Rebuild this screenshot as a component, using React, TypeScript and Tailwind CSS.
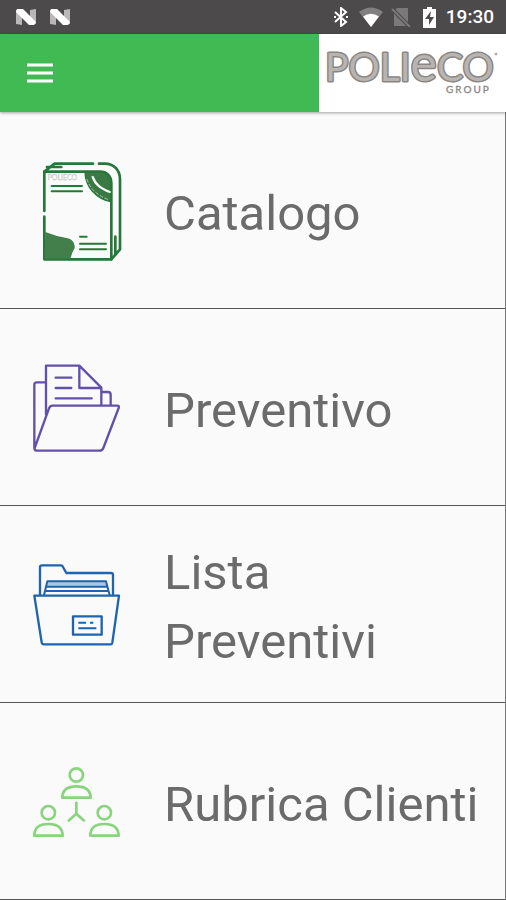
import type { ReactNode } from "react";

interface MenuItem {
  label: string;
  href: string;
  icon: ReactNode;
}

const ICON_CLASS = "h-[120px] w-[110px] shrink-0";

function CatalogIcon() {
  return (
    <svg viewBox="0 0 330 360" className={ICON_CLASS} fill="none" stroke="#27773a" strokeWidth="8" strokeLinecap="round" strokeLinejoin="round" aria-hidden="true">
      <path d="M58 183V65h120M58 200v128h201V100c0-22-14-35-34-35h-47" />
      <path d="M58 65l31-24h115M66 51h43M222 41h17c28 0 46 19 46 46v211l-26 30M271 260v55l14-17" />
      <path d="M80 108h91M80 124h91M165 260h20M165 281h78M165 298h78" strokeWidth="6" />
      <path d="M61 246l35 12 32 7c16 4 22 16 21 30-7 10-9 20-13 31H59z" fill="#437f4b" stroke="none" />
      <path d="M180 66h45c20 0 32 12 32 33v56c-42-8-76-43-77-89z" fill="#397943" strokeWidth="4" />
      <path d="M203 81c8 23 23 33 51 45" stroke="#fafafa" strokeWidth="7" />
      <path d="M186 88c9 30 34 50 65 61" stroke="#a9c7ab" strokeWidth="3" strokeDasharray="9 7" />
      <text x="68" y="90" fontFamily="Lato, sans-serif" fontSize="21" fill="none" stroke="#b4b8b4" strokeWidth="1">POLIECO</text>
    </svg>
  );
}

function OpenFolderIcon() {
  return (
    <svg viewBox="0 -24 330 360" className={ICON_CLASS} fill="none" stroke="#6250a9" strokeWidth="7" strokeLinejoin="round" aria-hidden="true">
      <path d="M62 82H35q-7 0-7 7v189q0 9 9 9h187q8 0 11-8l46-120q3-7-5-7H83q-8 0-11 8L29 279" />
      <path d="M63 181V32h100l66 66v54M163 32v67h66M229 111h20q8 0 8 8v33" />
      <path d="M92 68h47M92 99h47M92 130h108" strokeLinecap="round" />
    </svg>
  );
}

function ArchiveIcon() {
  return (
    <svg viewBox="0 -33 330 360" className={ICON_CLASS} fill="none" stroke="#1e64ae" strokeWidth="7" strokeLinejoin="round" aria-hidden="true">
      <path d="M66 79h178v14H66z" fill="#afc6e5" stroke="none" />
      <path d="M45 121V37q0-6 6-6h57q4 0 6 5l10 18h134q6 0 6 6v61" />
      <path d="M57 121l10-42h176l11 42M64 95h183M61 108h190" strokeWidth="6" />
      <path d="M28 122h254l-20 141q-1 5-6 5H57q-6 0-7-6z" />
      <path d="M144 184h86v55h-86z" />
      <path d="M160 203h23M195 203h10M160 220h54" strokeWidth="6" />
    </svg>
  );
}

function ContactsIcon() {
  return (
    <svg viewBox="0 -42 330 360" className={ICON_CLASS} fill="none" stroke="#8bd47f" strokeWidth="8" strokeLinejoin="round" aria-hidden="true">
      <circle cx="154" cy="60" r="20" />
      <path d="M112 128q0-34 42-34t43 34z" />
      <circle cx="70" cy="173" r="20" />
      <path d="M28 242q0-35 42-35t43 35z" />
      <circle cx="238" cy="173" r="20" />
      <path d="M196 242q0-35 42-35t43 35z" />
      <path d="M154 140v36l-25 23M154 176l25 23" />
    </svg>
  );
}

function NougatIcon() {
  return (
    <svg viewBox="0 0 20 16" className="h-4 w-5" aria-hidden="true">
      <path d="M0 1l6-1v16l-6-1zM14 1l6-1v15l-6 1z" fill="#b9b7b8" />
      <path d="M1 0h6l13 13-2 3h-5L0 3z" fill="#fff" />
    </svg>
  );
}

function StatusBar() {
  return (
    <div className="flex h-[34px] items-center justify-between bg-[#4d4a4b] pl-4 pr-3">
      <div className="flex gap-[14px]">
        <NougatIcon />
        <NougatIcon />
      </div>
      <div className="flex items-center">
        <svg viewBox="0 0 16 20" className="mr-[9px] h-5 w-4" fill="none" stroke="#fff" strokeWidth="2" aria-hidden="true">
          <path d="M2 5l11 10-5 4V1l5 4L2 15" />
          <path d="M1 10h2M13 10h2" />
        </svg>
        <svg viewBox="0 0 26 20" className="mr-[7px] h-5 w-[26px]" aria-hidden="true">
          <path d="M1 5Q13-4 25 5L13 20z" fill="#817f80" />
          <path d="M5 9.500Q13 4 21 9.500L13 20z" fill="#fff" />
        </svg>
        <svg viewBox="0 0 20 20" className="mr-[11px] h-5 w-5" aria-hidden="true">
          <path d="M6 1h11v18H3V4z" fill="#7b797a" />
          <path d="M1 2l18 18" stroke="#4d4a4b" strokeWidth="4" />
          <path d="M1 2l18 18" stroke="#7b797a" strokeWidth="2" />
        </svg>
        <svg viewBox="0 0 15 21" className="mr-[9px] h-[21px] w-[15px]" aria-hidden="true">
          <path d="M5 0h5v2h4v19H1V2h4z" fill="#fff" />
          <path d="M9 4l-6 8h4v6l5-8H8z" fill="#4d4a4b" />
        </svg>
        <span className="text-[19px] font-medium leading-5 text-white">19:30</span>
      </div>
    </div>
  );
}

function PoliecoLogo() {
  return (
    <svg viewBox="0 0 187 78" className="h-[78px] w-[187px]" fontFamily="Lato, sans-serif" role="img" aria-label="Polieco Group">
      <text x="6" y="47" fontSize="39" fill="#b8b4b1" stroke="#8a8683" strokeWidth="3" strokeLinejoin="round" paintOrder="stroke">
        POLI<tspan fontSize="50">e</tspan>CO
      </text>
      <text x="127" y="59" fontSize="10" letterSpacing="2" fill="#8a8683" stroke="#8a8683" strokeWidth="0.3">GROUP</text>
      <circle cx="177" cy="20" r="1" fill="none" stroke="#9a9693" />
    </svg>
  );
}

function Header() {
  return (
    <header className="relative flex h-[78px] bg-[#41ba54] shadow-[0_1px_3px_rgba(0,0,0,0.35)]">
      <div className="flex flex-1 items-center pl-[26px]">
        <button type="button" aria-label="Menu">
          <svg viewBox="0 0 28 20" className="h-5 w-7" stroke="#fff" strokeWidth="3" aria-hidden="true">
            <path d="M1 2h26M1 10h26M1 18h26" />
          </svg>
        </button>
      </div>
      <div className="bg-white">
        <PoliecoLogo />
      </div>
    </header>
  );
}

const menuItems: MenuItem[] = [
  { label: "Catalogo", href: "#catalogo", icon: <CatalogIcon /> },
  { label: "Preventivo", href: "#preventivo", icon: <OpenFolderIcon /> },
  { label: "Lista Preventivi", href: "#lista-preventivi", icon: <ArchiveIcon /> },
  { label: "Rubrica Clienti", href: "#rubrica-clienti", icon: <ContactsIcon /> },
];

export default function App() {
  return (
    <div className="bg-[#fafafa] font-['Roboto',sans-serif]">
      <StatusBar />
      <Header />
      <nav className="border-r border-[#777]">
        {menuItems.map((item) => (
          <a
            key={item.href}
            href={item.href}
            className="flex min-h-[197px] items-center gap-[29px] border-b border-[#555] pl-[25px] pr-5"
          >
            {item.icon}
            <span className="pt-1.5 text-[49px] leading-[69px] text-[#6b6b6b]">{item.label}</span>
          </a>
        ))}
      </nav>
    </div>
  );
}
